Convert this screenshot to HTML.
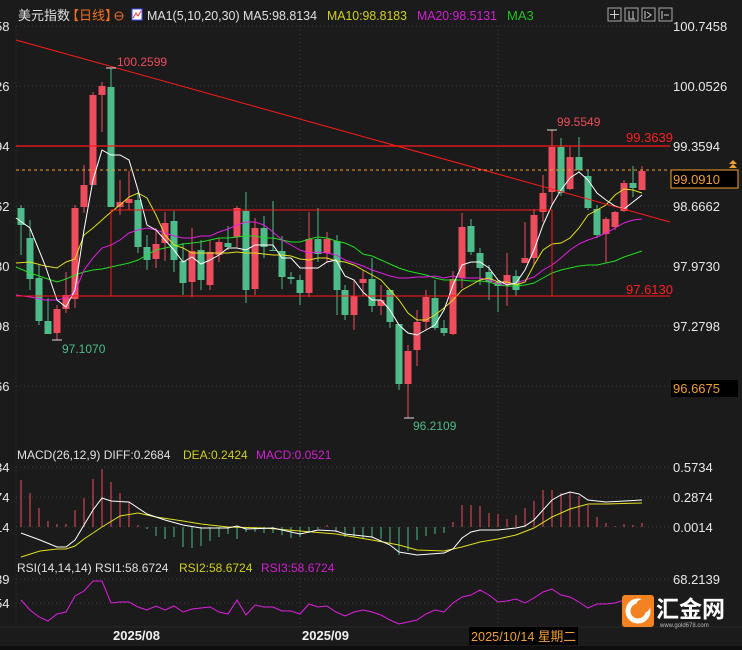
<!DOCTYPE html>
<html><head><meta charset="utf-8">
<style>
html,body{margin:0;padding:0;background:#1b1b1b;width:742px;height:650px;overflow:hidden}
svg{display:block}
text{font-family:"Liberation Sans","Noto Sans CJK SC",sans-serif}
</style></head><body>
<svg id="s" width="742" height="650" xmlns="http://www.w3.org/2000/svg">
<rect width="742" height="650" fill="#1b1b1b"/>
<g stroke="#3a3a3a" stroke-dasharray="1,3" stroke-width="1">
<line x1="16" y1="26" x2="670" y2="26"/><line x1="16" y1="86" x2="670" y2="86"/><line x1="16" y1="146" x2="670" y2="146"/><line x1="16" y1="206" x2="670" y2="206"/><line x1="16" y1="266" x2="670" y2="266"/><line x1="16" y1="326" x2="670" y2="326"/><line x1="16" y1="386" x2="670" y2="386"/>
<line x1="16" y1="467" x2="670" y2="467"/><line x1="16" y1="497" x2="670" y2="497"/><line x1="16" y1="527" x2="670" y2="527"/>
<line x1="16" y1="579" x2="670" y2="579"/><line x1="16" y1="603" x2="670" y2="603"/>
<line x1="16" y1="26" x2="16" y2="627"/><line x1="300" y1="26" x2="300" y2="627"/><line x1="498" y1="26" x2="498" y2="627"/>
</g>
<line x1="0" y1="627" x2="742" y2="627" stroke="#2a2a2a"/>
<rect x="0" y="646" width="742" height="4" fill="#0e0e0e"/>
<g id="cd"></g>
<g fill="none" stroke-width="1" id="ma"></g>
<line x1="16" y1="40" x2="670" y2="222" stroke="#ff1a1a" stroke-width="1"/>
<line x1="16" y1="146" x2="670" y2="146" stroke="#ff1a1a" stroke-width="1.3"/>
<line x1="16" y1="296" x2="670" y2="296" stroke="#ff1a1a" stroke-width="1"/>
<polyline points="111,296 111,210 552,210 552,296" fill="none" stroke="#ff1a1a" stroke-width="1"/>
<line x1="16" y1="170" x2="670" y2="170" stroke="#f0a030" stroke-dasharray="3,3"/>
<g font-size="12">
<text x="117" y="66" fill="#ee4d5d">100.2599</text>
<text x="62" y="353" fill="#4dbb8a">97.1070</text>
<text x="557" y="126" fill="#ee4d5d">99.5549</text>
<text x="413" y="430" fill="#4dbb8a">96.2109</text>
<text x="626" y="142" fill="#ff2020" font-size="13">99.3639</text>
<text x="626" y="294" fill="#ff2020" font-size="13">97.6130</text>
<line x1="106" y1="68" x2="116" y2="68" stroke="#ddd"/>
<line x1="52" y1="340" x2="62" y2="340" stroke="#ddd"/>
<line x1="547" y1="130" x2="557" y2="130" stroke="#ddd"/>
<line x1="404" y1="418" x2="414" y2="418" stroke="#ddd"/>
</g>
<g font-size="13" fill="#e8e8e8">
<text x="673" y="31">100.7458</text><text x="673" y="91">100.0526</text><text x="673" y="151">99.3594</text><text x="673" y="211">98.6662</text><text x="673" y="271">97.9730</text><text x="673" y="331">97.2798</text>
<text x="673" y="472">0.5734</text><text x="673" y="502">0.2874</text><text x="673" y="532">0.0014</text><text x="673" y="584">68.2139</text>
<text x="-5" y="31">58</text><text x="-5" y="91">26</text><text x="-5" y="151">94</text><text x="-5" y="211">62</text><text x="-5" y="271">30</text><text x="-5" y="331">98</text><text x="-5" y="391">66</text>
<text x="-5" y="472">34</text><text x="-5" y="502">74</text><text x="-5" y="532">14</text><text x="-5" y="584">39</text><text x="-5" y="608">54</text>
</g>
<rect x="671" y="170" width="67" height="18" fill="#000" stroke="#f0a030"/>
<text x="673" y="184" font-size="13" fill="#f0a030">99.0910</text>
<rect x="671" y="380" width="67" height="17" fill="#000"/>
<text x="673" y="393" font-size="13" fill="#f0a030">96.6675</text>
<path d="M729 168 l4 -4 l4 4z M729 164 l4 -4 l4 4z" fill="#f0a030"/>
<!-- header -->
<text x="18" y="20" font-size="13" fill="#e0e0e0">美元指数</text>
<text x="66" y="20" font-size="13" fill="#f07020">【日线】</text>
<circle cx="119" cy="16" r="4" fill="none" stroke="#f07020"/><line x1="115" y1="16" x2="123" y2="16" stroke="#f07020"/>
<rect x="132" y="9" width="10" height="11" fill="#fff" stroke="#44f"/><path d="M133 18 l3 -5 l2 3 l3 -5" stroke="#e33" fill="none"/>
<text x="147" y="20" font-size="13" fill="#e0e0e0" textLength="170" lengthAdjust="spacingAndGlyphs">MA1(5,10,20,30) MA5:98.8134</text>
<text x="327" y="20" font-size="13" fill="#d0d020" textLength="80" lengthAdjust="spacingAndGlyphs">MA10:98.8183</text>
<text x="417" y="20" font-size="13" fill="#d020d0" textLength="80" lengthAdjust="spacingAndGlyphs">MA20:98.5131</text>
<text x="507" y="20" font-size="13" fill="#20c020">MA3</text>
<g fill="none" stroke="#aaa"><rect x="608" y="8" width="13" height="13"/><rect x="625" y="8" width="13" height="13"/><rect x="642" y="8" width="13" height="13"/><rect x="659" y="8" width="13" height="13"/></g>
<path d="M614.5 10v9M610 14.5h9M629 11v8h6M633 11v8M645 11v8M647 12l4 3-4 3M662 11v8M664 15h5" stroke="#ccc" fill="none"/>
<text x="17" y="459" font-size="12" fill="#e0e0e0">MACD(26,12,9)  DIFF:0.2684</text>
<text x="183" y="459" font-size="12" fill="#d0d020">DEA:0.2424</text>
<text x="256" y="459" font-size="12" fill="#d020d0">MACD:0.0521</text>
<text x="17" y="572" font-size="12" fill="#e0e0e0">RSI(14,14,14)  RSI1:58.6724</text>
<text x="179" y="572" font-size="12" fill="#d0d020">RSI2:58.6724</text>
<text x="261" y="572" font-size="12" fill="#d020d0">RSI3:58.6724</text>
<text x="113" y="640" font-size="13" font-weight="bold" fill="#f0f0f0">2025/08</text>
<text x="302" y="640" font-size="13" font-weight="bold" fill="#f0f0f0">2025/09</text>
<rect x="469" y="627" width="109" height="18" fill="#000"/>
<text x="471" y="641" font-size="13" fill="#f0a030" textLength="105" lengthAdjust="spacingAndGlyphs">2025/10/14 星期二</text>
<rect x="622" y="595" width="32" height="32" rx="3" fill="#f58220"/>
<circle cx="638" cy="611" r="10" fill="none" stroke="#fff" stroke-width="5"/>
<circle cx="643" cy="606" r="7" fill="#f58220"/>
<text x="656" y="617" font-size="23" fill="#ffffff" font-weight="bold">汇金网</text>
<text x="660" y="627" font-size="6" fill="#bbb">www.gold678.com</text>
</svg>
<script>
var C=[[21,'g',208,225,205,255],[30,'g',238,279,220,290],[39,'g',278,321,265,325],[48,'g',321,334,298,334],[57,'r',309,333,305,340],[66,'r',295,309,272,313],[75,'r',208,299,205,308],[84,'r',185,207,165,213],[93,'r',95,185,92,185],[102,'r',86,95,82,132],[111,'g',87,207,68,207],[120,'r',202,207,180,215],[129,'r',199,203,171,210],[138,'g',200,247,193,253],[147,'g',247,260,235,270],[156,'r',244,259,228,268],[165,'r',223,243,212,261],[174,'g',221,260,211,272],[183,'g',261,283,243,295],[192,'r',251,282,228,297],[201,'g',250,280,240,290],[210,'r',252,285,240,290],[219,'r',242,255,238,262],[228,'g',243,247,226,250],[237,'r',208,237,206,247],[246,'g',211,290,192,303],[255,'r',228,289,218,295],[264,'g',228,247,216,258],[273,'g',250,251,201,251],[282,'g',251,277,236,289],[291,'g',277,279,272,284],[300,'g',280,293,275,305],[309,'r',239,293,212,297],[318,'g',239,254,208,262],[327,'r',239,253,232,262],[337,'g',241,290,235,315],[345,'g',290,315,285,320],[354,'r',296,315,280,330],[363,'r',279,283,270,296],[372,'g',279,306,258,312],[381,'r',300,306,285,315],[390,'g',290,322,290,328],[399,'g',324,384,324,390],[408,'r',351,384,345,418],[417,'r',322,350,310,366],[426,'r',297,322,290,330],[435,'g',298,328,280,330],[444,'g',328,333,320,336],[453,'r',279,334,271,335],[462,'r',227,278,213,288],[471,'g',226,252,219,255],[480,'g',253,268,248,285],[489,'g',272,282,265,300],[498,'g',282,286,280,312],[507,'r',275,284,253,306],[516,'g',276,290,270,296],[525,'r',258,263,222,263],[534,'r',215,258,209,265],[543,'r',193,212,175,222],[552,'r',147,192,130,205],[561,'g',147,193,138,196],[570,'r',157,189,147,190],[579,'g',157,170,137,172],[588,'g',176,208,170,210],[597,'g',209,235,205,238],[606,'r',219,234,217,263],[615,'r',212,227,211,230],[624,'r',183,211,180,212],[633,'g',183,188,166,197],[642,'r',171,190,166,190]];
var cd=document.getElementById('cd'),h='';
C.forEach(function(c){var col=c[1]=='r'?'#ee4d5d':'#4dbb8a';
h+='<line x1="'+c[0]+'" y1="'+c[4]+'" x2="'+c[0]+'" y2="'+c[5]+'" stroke="'+col+'"/>';
h+='<rect x="'+(c[0]-3.5)+'" y="'+c[2]+'" width="7" height="'+Math.max(1,c[3]-c[2])+'" fill="'+col+'"/>';});
var H=[[21,480],[30,493],[39,508],[48,521],[57,524],[66,524],[75,510],[84,498],[93,479],[102,469],[111,482],[120,493],[129,502],[138,525],[147,529],[156,536],[165,539],[174,537],[183,547],[192,548],[201,546],[210,541],[219,537],[228,534],[237,539],[246,532],[255,532],[264,533],[273,533],[282,535],[291,538],[300,537],[309,533],[318,529],[327,525],[336,532],[345,537],[354,537],[363,538],[372,538],[381,539],[390,543],[399,555],[408,551],[417,540],[426,536],[435,534],[444,533],[453,522],[462,505],[471,505],[480,506],[489,513],[498,514],[507,519],[516,515],[525,508],[534,501],[543,490],[552,490],[561,493],[570,492],[579,496],[588,505],[597,517],[606,523],[615,526],[624,524],[633,525],[642,523]];
H.forEach(function(b){var col=b[1]<527?'#ee4d5d':'#4dbb8a';h+='<line x1="'+b[0]+'" y1="527" x2="'+b[0]+'" y2="'+b[1]+'" stroke="'+col+'"/>';});
cd.innerHTML=h;
function pl(p,col){return '<polyline fill="none" stroke-width="1" stroke="'+col+'" points="'+p+'"/>';}
var m='';
m+=pl('16,267 30,273 45,278 57,282 66,279 75,275 84,272 93,270 102,269 111,267 120,265 129,263 138,260 147,255 156,250 165,248 174,246 183,244 192,243 201,242 210,240 219,238 228,238 237,237 246,236 255,236 264,238 273,238 282,240 291,242 300,242 309,239 318,237 327,238 336,241 345,243 354,247 363,254 372,256 381,260 390,264 399,268 408,271 417,273 426,275 435,278 444,280 453,280 462,280 471,281 480,281 489,282 498,285 507,286 516,286 525,285 534,283 543,278 552,273 561,270 570,268 579,266 588,265 597,265 606,263 615,261 624,257 633,254 642,251','#22dd22');
m+=pl('16,295 30,297 45,300 57,300 66,298 75,292 84,270 93,258 102,248 111,245 120,240 129,233 138,230 147,228 156,230 165,233 174,236 183,238 192,238 201,236 210,236 219,232 228,229 237,225 246,222 255,222 264,225 273,232 282,240 291,245 300,250 309,253 318,252 327,253 336,255 345,260 354,263 363,266 372,270 381,273 390,276 399,278 408,278 417,277 426,277 435,276 444,278 453,276 462,278 471,278 480,278 489,280 498,284 507,284 516,283 525,280 534,277 543,270 552,265 561,258 570,250 579,244 588,240 597,237 606,233 615,228 624,223 633,220 642,219','#e020e0');
m+=pl('16,263 30,262 45,266 57,268 66,262 75,259 84,235 93,228 102,220 111,212 120,205 129,197 138,193 147,198 156,215 165,235 174,245 183,248 192,253 201,253 210,253 219,253 228,253 237,252 246,253 255,253 264,254 273,255 282,255 291,256 300,259 309,260 318,258 327,258 336,261 345,262 354,265 363,270 372,275 381,280 390,290 399,300 408,313 417,320 426,320 435,315 444,308 453,300 462,290 471,285 480,280 489,278 498,282 507,282 516,285 525,282 534,265 543,250 552,244 561,243 570,238 579,228 588,215 597,210 606,205 615,195 624,189 633,190 642,193','#e0e020');
m+=pl('16,218 30,228 45,265 57,300 66,307 75,290 84,230 93,180 102,150 111,155 120,155 129,160 138,190 147,225 156,230 165,240 174,250 183,262 192,257 201,264 210,260 219,255 228,248 237,248 246,250 255,245 264,245 273,245 282,258 291,258 300,268 309,268 318,268 327,262 336,260 345,276 354,280 363,292 372,300 381,300 390,310 399,325 408,333 417,335 426,330 435,325 444,310 453,285 462,265 471,262 480,262 489,268 498,280 507,285 516,283 525,270 534,250 543,225 552,205 561,190 570,178 579,172 588,180 597,193 606,200 615,206 624,209 633,202 642,195','#ffffff');
m+=pl('21,557 40,551 57,549 66,549 75,546 84,539 102,527 120,516 138,513 156,517 183,521 201,524 228,527 264,528 300,531 336,534 372,540 399,545 417,550 444,551 462,547 480,542 498,539 516,535 534,528 552,517 570,509 588,504 606,504 642,503','#e0e020');
m+=pl('21,533 40,540 57,547 66,547 75,540 84,525 93,510 102,498 111,501 129,502 147,514 165,520 183,525 201,528 228,528 237,526 246,529 273,528 300,534 318,530 336,531 345,534 372,537 390,545 399,552 417,555 444,553 453,549 462,538 471,532 480,530 498,530 516,528 525,526 534,520 543,510 552,500 561,495 570,492 579,494 588,500 606,502 642,500','#ffffff');
m+=pl('21,600 30,610 39,617 48,621 57,614 66,612 75,596 84,591 93,581 102,581 111,603 120,602 129,602 138,607 147,610 156,606 165,610 174,606 183,612 192,609 201,608 210,607 219,612 228,614 237,600 246,615 255,605 264,607 273,607 282,611 291,611 300,614 309,604 318,607 327,606 336,612 345,616 354,612 363,610 372,612 381,615 390,620 399,624 408,622 417,620 426,614 435,610 444,612 453,603 462,597 471,595 480,590 489,595 498,602 507,601 516,599 525,603 534,598 543,592 552,589 561,595 570,597 579,602 588,608 597,604 606,604 615,603 624,600','#e020e0');
document.getElementById('ma').innerHTML=m;
</script>
</body></html>
